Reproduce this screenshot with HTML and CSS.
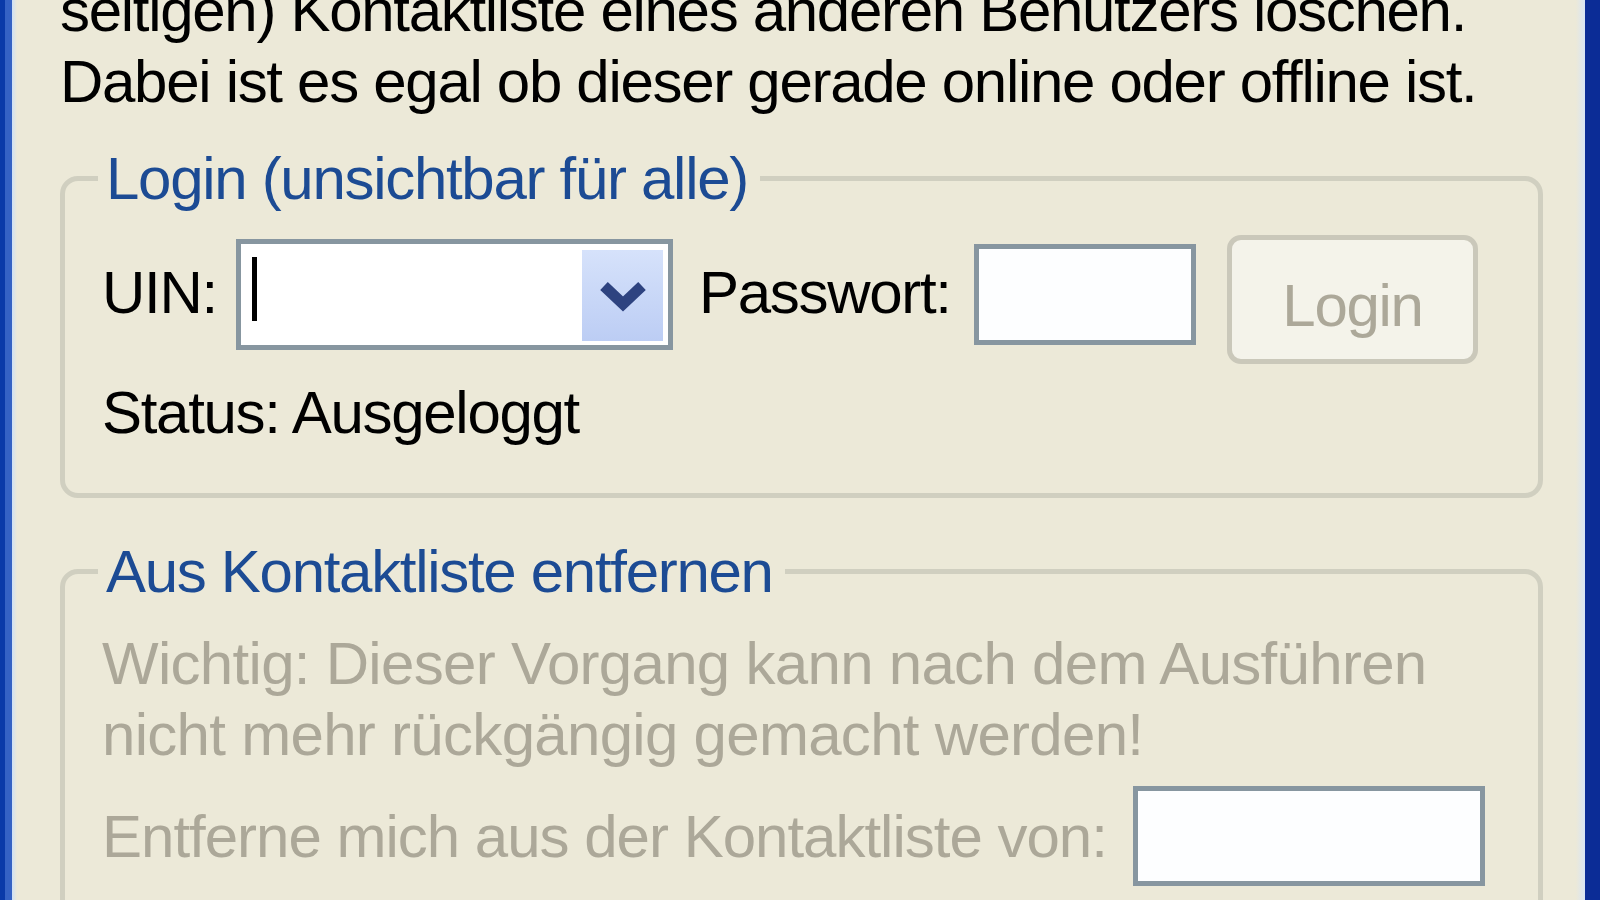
FILE: index.html
```html
<!DOCTYPE html>
<html lang="de">
<head>
  <meta charset="UTF-8">
  <meta name="viewport" content="width=device-width, initial-scale=1.0">
  <title>Kontaktliste</title>
  <link rel="stylesheet" href="styles.css">
</head>
<body>
  <div class="window">
    <div class="frame frame-left"></div>

    <main class="client">
      <p class="intro">seitigen) Kontaktliste eines anderen Benutzers löschen.<br>Dabei ist es egal ob dieser gerade online oder offline ist.</p>

      <fieldset class="group">
        <legend>Login (unsichtbar für alle)</legend>
        <div class="login-row">
          <label class="lbl-uin" for="uin">UIN:</label>
          <div class="combo" id="uin">
            <span class="caret"></span>
            <span class="drop">
              <svg width="50" height="32" viewBox="0 0 50 32">
                <polyline points="6,6 25,24 44,6" fill="none" stroke="#2e4380" stroke-width="11" stroke-linejoin="miter"/>
              </svg>
            </span>
          </div>
          <label class="lbl-pass" for="pass">Passwort:</label>
          <div class="edit edit-pass" id="pass"></div>
          <button class="btn" type="button" disabled>Login</button>
        </div>
        <div class="status">Status: Ausgeloggt</div>
      </fieldset>

      <fieldset class="group group-remove">
        <legend>Aus Kontaktliste entfernen</legend>
        <p class="warn">Wichtig: Dieser Vorgang kann nach dem Ausführen<br>nicht mehr rückgängig gemacht werden!</p>
        <div class="remove-row">
          <label class="lbl-remove" for="victim">Entferne mich aus der Kontaktliste von:</label>
          <div class="edit edit-remove" id="victim"></div>
        </div>
      </fieldset>
    </main>

    <div class="frame frame-right"></div>
  </div>
</body>
</html>
```

FILE: styles.css
```css
body {
  margin: 0;
  background-color: #ece9d8;
  font-family: 'Liberation Sans', Arial, sans-serif;
  font-size: 60px;
  line-height: 71px;
  letter-spacing: -1.3px;
  color: #000;
  overflow: hidden;
}
.window {
  display: flex;
  height: 900px;
}
.frame-left {
  width: 17px;
  flex: 0 0 17px;
  background: linear-gradient(to right, #0a3aa8 0, #0a3aa8 5px, #3562c4 5px, #3562c4 12px, #cfe0f5 12px, #ece9d8 17px);
}
.frame-right {
  width: 24px;
  flex: 0 0 24px;
  background: linear-gradient(to right, #ece9d8 0, #d8e5f5 9px, #0b2c96 9px, #0b2c96 24px);
}
.client {
  flex: 1;
  padding: 0 33px 0 43px;
  min-width: 0;
}
.intro {
  margin: -25px 0 0 0;
}
.group {
  margin: 26px 0 0 0;
  padding: 21px 30px 45px 37px;
  border: 5px solid #d0cfc0;
  border-radius: 18px;
  min-width: 0;
}
.group legend {
  color: #1c4b94;
  padding: 0 12px 0 8px;
  margin-left: -4px;
}
.login-row {
  display: flex;
  align-items: flex-start;
  height: 129px;
}
.lbl-uin {
  width: 134px;
  flex: 0 0 134px;
  margin-top: 22px;
}
.combo {
  display: flex;
  align-items: flex-start;
  box-sizing: border-box;
  width: 437px;
  height: 111px;
  margin-top: 4px;
  border: 5px solid #8796a0;
  background-color: #fff;
}
.caret {
  width: 5px;
  height: 64px;
  margin: 13px 0 0 11px;
  background-color: #000;
}
.drop {
  display: flex;
  align-items: center;
  justify-content: center;
  width: 81px;
  height: 91px;
  margin: 6px 5px 0 auto;
  background: linear-gradient(#d6e2fb, #bccdf4);
}
.lbl-pass {
  width: 275px;
  flex: 0 0 275px;
  margin: 22px 0 0 26px;
}
.edit {
  box-sizing: border-box;
  border: 5px solid #8796a0;
  background-color: #fdfeff;
}
.edit-pass {
  width: 222px;
  height: 101px;
  margin-top: 9px;
}
.btn {
  box-sizing: border-box;
  width: 251px;
  height: 129px;
  margin-left: 31px;
  padding: 12px 0 0 0;
  border: 5px solid #cac8ba;
  border-radius: 14px;
  background-color: #f4f3ea;
  color: #aca899;
  font: inherit;
  letter-spacing: inherit;
}
.status {
  margin-top: 13px;
}

/* disabled group: everything but the legend is greyed out */
.group-remove {
  margin-top: 38px;
  padding-bottom: 60px;
}
.warn {
  margin: 0;
  color: #aca899;
  letter-spacing: -0.7px;
}
.remove-row {
  display: flex;
  align-items: center;
  margin-top: 16px;
}
.lbl-remove {
  width: 1031px;
  flex: 0 0 1031px;
  color: #aca899;
  letter-spacing: -1px;
}
.edit-remove {
  width: 352px;
  height: 100px;
}
```
